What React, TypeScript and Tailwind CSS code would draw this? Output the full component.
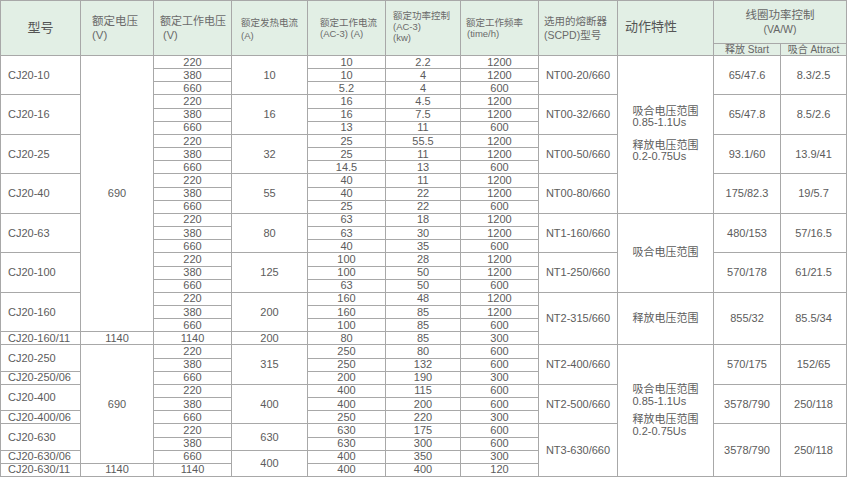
import React from "react";

type Seg = [React.ReactNode, number];

const rowSpanCls: Record<number, string> = {
  1: "",
  2: "row-span-2",
  3: "row-span-3",
  4: "row-span-4",
  6: "row-span-6",
  9: "row-span-9",
  10: "row-span-10",
  12: "row-span-12",
  21: "row-span-[21]",
};

const colStartCls = [
  "",
  "col-start-1",
  "col-start-2",
  "col-start-3",
  "col-start-4",
  "col-start-5",
  "col-start-6",
  "col-start-7",
  "col-start-8",
  "col-start-9",
  "col-start-10",
  "col-start-11",
];

const ones = (arr: string[]): Seg[] => arr.map((v) => [v, 1]);

const volts = (): string[] => {
  const a: string[] = [];
  for (let i = 0; i < 7; i++) a.push("220", "380", "660");
  a.push("1140");
  for (let i = 0; i < 3; i++) a.push("220", "380", "660");
  a.push("1140");
  return a;
};

const freq = (): string[] => {
  const a: string[] = [];
  for (let i = 0; i < 7; i++) a.push("1200", "1200", "600");
  a.push("300");
  a.push("600", "600", "300", "600", "600", "300", "600", "600", "300", "120");
  return a;
};

function Block({ gap }: { gap: string }) {
  return (
    <div className="flex flex-col text-left leading-[11.5px]">
      <span>吸合电压范围</span>
      <span>0.85-1.1Us</span>
      <span className={gap}>释放电压范围</span>
      <span>0.2-0.75Us</span>
    </div>
  );
}

const columns: Seg[][] = [
  [
    ["CJ20-10", 3],
    ["CJ20-16", 3],
    ["CJ20-25", 3],
    ["CJ20-40", 3],
    ["CJ20-63", 3],
    ["CJ20-100", 3],
    ["CJ20-160", 3],
    ["CJ20-160/11", 1],
    ["CJ20-250", 2],
    ["CJ20-250/06", 1],
    ["CJ20-400", 2],
    ["CJ20-400/06", 1],
    ["CJ20-630", 2],
    ["CJ20-630/06", 1],
    ["CJ20-630/11", 1],
  ],
  [
    ["690", 21],
    ["1140", 1],
    ["690", 9],
    ["1140", 1],
  ],
  ones(volts()),
  [
    ["10", 3],
    ["16", 3],
    ["32", 3],
    ["55", 3],
    ["80", 3],
    ["125", 3],
    ["200", 3],
    ["200", 1],
    ["315", 3],
    ["400", 3],
    ["630", 2],
    ["400", 2],
  ],
  ones(
    "10,10,5.2,16,16,13,25,25,14.5,40,40,25,63,63,40,100,100,63,160,160,100,80,250,250,200,400,400,250,630,630,400,400".split(
      ","
    )
  ),
  ones(
    "2.2,4,4,4.5,7.5,11,55.5,11,13,11,22,22,18,30,35,28,50,50,48,85,85,85,80,132,190,115,200,220,175,300,350,400".split(
      ","
    )
  ),
  ones(freq()),
  [
    ["NT00-20/660", 3],
    ["NT00-32/660", 3],
    ["NT00-50/660", 3],
    ["NT00-80/660", 3],
    ["NT1-160/660", 3],
    ["NT1-250/660", 3],
    ["NT2-315/660", 4],
    ["NT2-400/660", 3],
    ["NT2-500/660", 3],
    ["NT3-630/660", 4],
  ],
  [
    [<Block gap="mt-[11px]" />, 12],
    ["吸合电压范围", 6],
    ["释放电压范围", 4],
    [<Block gap="mt-[7px]" />, 10],
  ],
  [
    ["65/47.6", 3],
    ["65/47.8", 3],
    ["93.1/60", 3],
    ["175/82.3", 3],
    ["480/153", 3],
    ["570/178", 3],
    ["855/32", 4],
    ["570/175", 3],
    ["3578/790", 3],
    ["3578/790", 4],
  ],
  [
    ["8.3/2.5", 3],
    ["8.5/2.6", 3],
    ["13.9/41", 3],
    ["19/5.7", 3],
    ["57/16.5", 3],
    ["61/21.5", 3],
    ["85.5/34", 4],
    ["152/65", 3],
    ["250/118", 3],
    ["250/118", 4],
  ],
];

type Cell = { row: number; col: number; span: number; content: React.ReactNode };

const cells: Cell[] = [];
columns.forEach((segs, ci) => {
  let r = 0;
  segs.forEach(([content, span]) => {
    cells.push({ row: r, col: ci + 1, span, content });
    r += span;
  });
});
cells.sort((a, b) => a.row - b.row || a.col - b.col);

function HeadCell({ children, extra }: { children: React.ReactNode; extra: string }) {
  return (
    <div className={`bg-[#e2efe5] flex flex-col justify-center row-span-2 ${extra}`}>{children}</div>
  );
}

export default function App() {
  return (
    <div className="w-[847px] h-[477px] bg-white font-[family-name:'Liberation_Sans','Noto_Sans_CJK_SC',sans-serif]">
      <div className="grid w-[847px] h-[477px] gap-px p-px bg-[#a8a8a8] grid-cols-[79px_72px_77px_75px_77px_74px_77px_78px_95px_66px_65px] grid-rows-[42px_11px_repeat(32,minmax(0,1fr))] text-[#5c5c5c]">
        <HeadCell extra="col-start-1 items-center text-[13px] text-[#555]">型号</HeadCell>
        <HeadCell extra="col-start-2 pl-[11px] text-[11.5px] leading-[14px] text-[#6a6a6a]">
          <span>额定电压</span>
          <span>(V)</span>
        </HeadCell>
        <HeadCell extra="col-start-3 pl-[6px] text-[11px] leading-[14px] text-[#6a6a6a]">
          <span>额定工作电压</span>
          <span className="pl-[3px]">(V)</span>
        </HeadCell>
        <HeadCell extra="col-start-4 pl-[9px] text-[9.5px] leading-[13px] text-[#6a6a6a] pt-[2px]">
          <span>额定发热电流</span>
          <span>(A)</span>
        </HeadCell>
        <HeadCell extra="col-start-5 pl-[12px] text-[9.5px] leading-[11px] text-[#6a6a6a]">
          <span>额定工作电流</span>
          <span>(AC-3) (A)</span>
        </HeadCell>
        <HeadCell extra="col-start-6 pl-[7px] text-[9.5px] leading-[11px] text-[#6a6a6a] pb-[3px]">
          <span>额定功率控制</span>
          <span>(AC-3)</span>
          <span>(kw)</span>
        </HeadCell>
        <HeadCell extra="col-start-7 pl-[5px] text-[9.5px] leading-[11px] text-[#6a6a6a]">
          <span>额定工作频率</span>
          <span className="pl-[1px]">(time/h)</span>
        </HeadCell>
        <HeadCell extra="col-start-8 pl-[5px] text-[10.5px] leading-[14px] text-[#6a6a6a]">
          <span>选用的熔断器</span>
          <span>(SCPD)型号</span>
        </HeadCell>
        <HeadCell extra="col-start-9 pl-[7px] text-[13px] text-[#555] pb-[2px]">
          <span>动作特性</span>
        </HeadCell>
        <div className="col-start-10 col-span-2 bg-[#e2efe5] flex flex-col items-center justify-center text-[11.5px] leading-[14px] text-[#666]">
          <span>线圈功率控制</span>
          <span className="text-[10.5px]">(VA/W)</span>
        </div>
        <div className="col-start-10 bg-[#e2efe5] flex items-center justify-center text-[10px] leading-none text-[#666]">
          释放 Start
        </div>
        <div className="col-start-11 bg-[#e2efe5] flex items-center justify-center text-[10px] leading-none text-[#666]">
          吸合 Attract
        </div>
        {cells.map((c, i) => (
          <div
            key={i}
            className={`bg-white flex items-center text-[11px] leading-none ${colStartCls[c.col]} ${rowSpanCls[c.span]} ${
              c.col === 1 ? "justify-start pl-[7px]" : "justify-center"
            }`}
          >
            {c.content}
          </div>
        ))}
      </div>
    </div>
  );
}
